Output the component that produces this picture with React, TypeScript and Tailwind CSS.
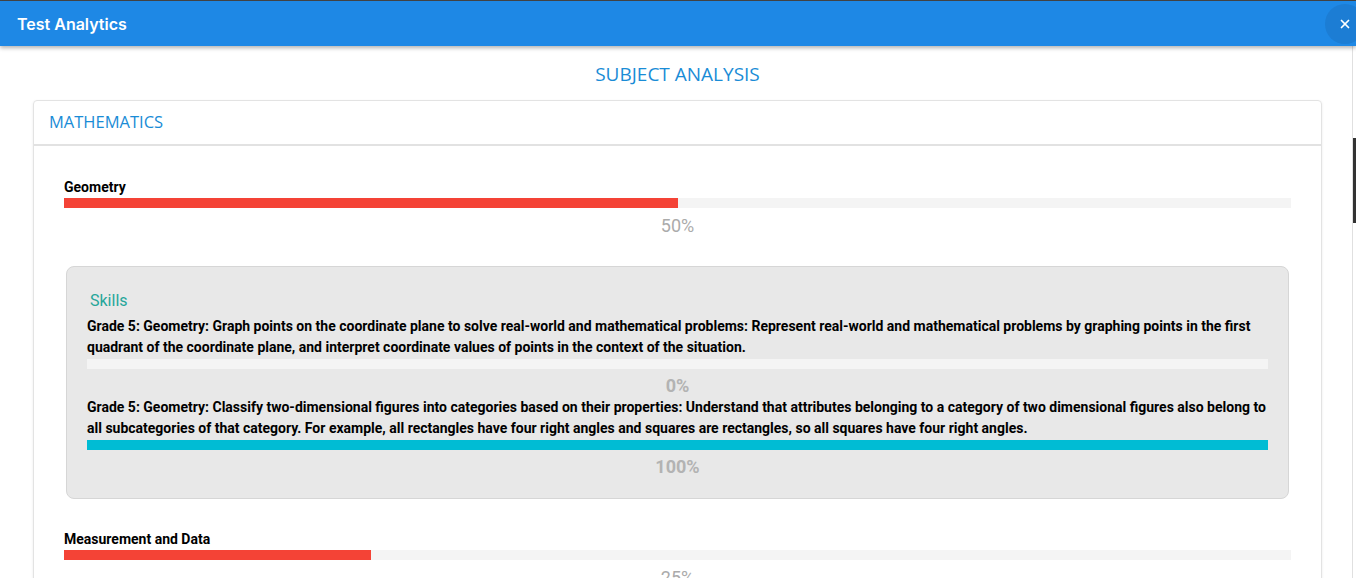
import { X } from "lucide-react";

const skills = [
  {
    text: "Grade 5: Geometry: Graph points on the coordinate plane to solve real-world and mathematical problems: Represent real-world and mathematical problems by graphing points in the first quadrant of the coordinate plane, and interpret coordinate values of points in the context of the situation.",
    value: 0,
  },
  {
    text: "Grade 5: Geometry: Classify two-dimensional figures into categories based on their properties: Understand that attributes belonging to a category of two dimensional figures also belong to all subcategories of that category. For example, all rectangles have four right angles and squares are rectangles, so all squares have four right angles.",
    value: 100,
  },
];

const Bar = ({ value, color }: { value: number; color: string }) => (
  <div className="h-[10px] w-full bg-[#f4f4f4]">
    <div className={`h-full ${color}`} style={{ width: `${value}%` }} />
  </div>
);

const Topic = ({ name, value }: { name: string; value: number }) => (
  <div>
    <div className="text-[14px] leading-[16px] font-bold text-black">{name}</div>
    <div className="mt-[3px]">
      <Bar value={value} color="bg-[#f44336]" />
    </div>
    <div className="mt-[7px] text-center text-[18px] leading-[22px] text-[#ababab]">{value}%</div>
  </div>
);

export default function App() {
  return (
    <div className="h-[578px] w-[1356px] overflow-hidden bg-white font-['Roboto',sans-serif]">
      <div className="h-px bg-[#454545]" />
      {/* Header */}
      <div className="relative z-10 flex h-[45px] items-center justify-between bg-[#1e88e5] pl-[17px] shadow-[0_2px_4px_rgba(0,0,0,0.3)]">
        <span className="font-['Inter',sans-serif] text-[16px] font-semibold text-white">Test Analytics</span>
        <button className="mr-[-9px] flex h-[40px] w-[40px] items-center justify-center rounded-full bg-[#1c7dd4] text-white">
          <X className="h-[14px] w-[14px]" strokeWidth={3} />
        </button>
      </div>

      <div className="flex">
        {/* Content */}
        <div className="w-[1352px] pl-[33px] pr-[30px]">
          <h2 className="mt-[16px] text-center font-['Open_Sans',sans-serif] text-[19px] leading-[24px] text-[#1a8cd6]">
            SUBJECT ANALYSIS
          </h2>

          <div className="mt-[14px] rounded-[4px] border border-[#e3e3e3] shadow-[0_1px_3px_rgba(0,0,0,0.08)]">
            <div className="flex h-[45px] items-center border-b-2 border-[#e2e2e2] pl-[15px] font-['Open_Sans',sans-serif] text-[16.5px] text-[#1a8cd6]">
              MATHEMATICS
            </div>

            <div className="px-[30px] pt-[33px]">
              <Topic name="Geometry" value={50} />

              <div className="mx-[2px] mt-[29px] rounded-[8px] border border-[#d6d6d6] bg-[#e8e8e8] px-[20px] pb-[20px] pt-[24px]">
                <div className="pl-[3px] text-[16px] leading-[20px] text-[#26a69a]">Skills</div>
                <div className="mt-[5px]">
                  {skills.map((s, i) => (
                    <div key={i}>
                      <div className="text-[14px] leading-[21px] font-bold text-black">{s.text}</div>
                      <div className="mt-px">
                        <Bar value={s.value} color="bg-[#00bcd4]" />
                      </div>
                      <div className="mt-[6px] text-center text-[18px] leading-[22px] font-bold text-[#b3b3b3]">
                        {s.value}%
                      </div>
                    </div>
                  ))}
                </div>
              </div>

              <div className="mt-[32px]">
                <Topic name="Measurement and Data" value={25} />
              </div>
            </div>
          </div>
        </div>

        {/* Scrollbar */}
        <div className="h-[540px] w-[4px] border-l border-[#e0e0e0]">
          <div className="mt-[92px] h-[85px] w-full bg-[#333]" />
        </div>
      </div>
    </div>
  );
}
